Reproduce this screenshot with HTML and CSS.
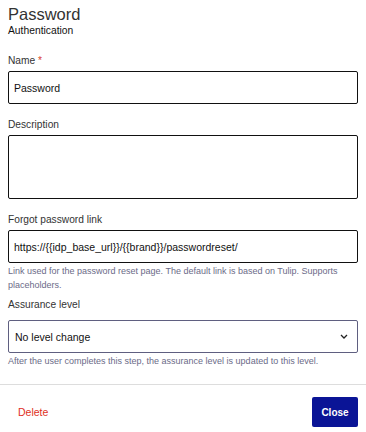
FILE: index.html
```html
<!DOCTYPE html>
<html>
<head>
<meta charset="utf-8">
<link rel="stylesheet" href="styles.css">
</head>
<body>
<div class="panel">
  <div class="content">
    <div class="header">
      <div class="title">Password</div>
      <div class="subtitle">Authentication</div>
    </div>
    <div class="field field-name">
      <label class="label">Name <span class="req">*</span></label>
      <div class="input">Password</div>
    </div>
    <div class="field">
      <label class="label">Description</label>
      <div class="textarea"></div>
    </div>
    <div class="field">
      <label class="label">Forgot password link</label>
      <div class="input">https://{{idp_base_url}}/{{brand}}/passwordreset/</div>
      <div class="help">Link used for the password reset page. The default link is based on Tulip. Supports placeholders.</div>
    </div>
    <div class="field field-after-help">
      <label class="label label-select">Assurance level</label>
      <div class="select">
        <span>No level change</span>
        <svg class="chev" width="8" height="5" viewBox="0 0 8 5"><path d="M1 1l3 3 3-3" fill="none" stroke="#222" stroke-width="1.3"/></svg>
      </div>
      <div class="help">After the user completes this step, the assurance level is updated to this level.</div>
    </div>
  </div>
  <div class="footer">
    <span class="delete">Delete</span>
    <span class="close">Close</span>
  </div>
</div>
</body>
</html>
```
FILE: styles.css
```css
html, body {
  margin: 0;
  padding: 0;
  background: #fff;
}
body {
  font-family: "Liberation Sans", Arial, sans-serif;
  color: #333;
}
.panel {
  width: 366px;
  height: 432px;
  display: flex;
  flex-direction: column;
}
.content {
  padding: 5px 8px 0 8px;
  display: flex;
  flex-direction: column;
}
.title {
  font-size: 16.5px;
  line-height: 19px;
  color: #333;
}
.subtitle {
  font-size: 10.3px;
  line-height: 12px;
  color: #111;
  margin-top: 1px;
}
.field {
  display: flex;
  flex-direction: column;
  margin-top: 15px;
}
.field-name {
  margin-top: 18px;
}
.field-after-help {
  margin-top: 7px;
}
.label {
  font-size: 10.2px;
  line-height: 12px;
  color: #333;
  margin-bottom: 4px;
}
.label-select {
  margin-bottom: 9px;
}
.req {
  color: #d9412b;
}
.input {
  box-sizing: border-box;
  height: 33px;
  border: 1px solid #111;
  border-radius: 2px;
  padding: 0 5px;
  font-size: 10.5px;
  color: #111;
  display: flex;
  align-items: center;
}
.textarea {
  box-sizing: border-box;
  height: 64px;
  border: 1px solid #111;
  border-radius: 2px;
}
.help {
  font-size: 9px;
  line-height: 14px;
  color: #6b6b88;
  margin-top: 1px;
}
.select {
  box-sizing: border-box;
  height: 33px;
  border: 1px solid #5f5f80;
  border-radius: 2px;
  padding: 0 9px 0 6px;
  font-size: 10.5px;
  color: #111;
  display: flex;
  align-items: center;
  justify-content: space-between;
}
.footer {
  margin-top: 16px;
  border-top: 1px solid #ddd;
  display: flex;
  align-items: center;
  justify-content: space-between;
  padding: 12px 8px 0 18px;
}
.delete {
  color: #e0301e;
  font-size: 10.5px;
}
.close {
  background: #0a1496;
  color: #fff;
  font-size: 10px;
  font-weight: bold;
  width: 46px;
  height: 30px;
  display: flex;
  align-items: center;
  justify-content: center;
  border-radius: 2px;
}
```
